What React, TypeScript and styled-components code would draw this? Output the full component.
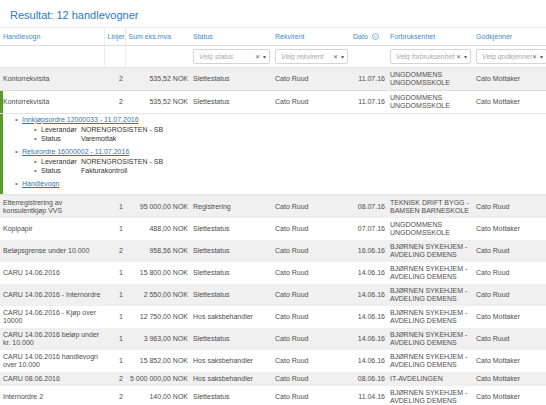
import React from 'react';
import styled, { createGlobalStyle } from 'styled-components';

const GlobalStyle = createGlobalStyle`
  html, body {
    margin: 0;
    padding: 0;
    background: #ffffff;
    overflow: hidden;
  }
  body {
    font-family: 'Liberation Sans', Arial, sans-serif;
  }
`;

const colors = {
  title: '#2a7bbd',
  head: '#3b8bd0',
  text: '#4d4d4d',
  dark: '#333333',
  link: '#2f76b8',
  stripe: '#f0f0f0',
  line: '#e2e2e2',
  green: '#5a9c28'
};

type Cart = {
  name: string;
  lines: number;
  sum: string;
  status: string;
  requester: string;
  date: string;
  unit: string;
  approver: string;
  expanded?: boolean;
};

const BJORNEN = 'BJØRNEN SYKEHJEM - AVDELING DEMENS';
const UNGDOM = 'UNGDOMMENS UNGDOMSSKOLE';

const carts: Cart[] = [
  { name: 'Kontorrekvisita', lines: 2, sum: '535,52 NOK', status: 'Slettestatus', requester: 'Cato Ruud', date: '11.07.16', unit: UNGDOM, approver: 'Cato Mottaker' },
  { name: 'Kontorrekvisita', lines: 2, sum: '535,52 NOK', status: 'Slettestatus', requester: 'Cato Ruud', date: '11.07.16', unit: UNGDOM, approver: 'Cato Mottaker', expanded: true },
  { name: 'Etterregistrering av konsulentkjøp VVS', lines: 1, sum: '95 000,00 NOK', status: 'Registrering', requester: 'Cato Ruud', date: '08.07.16', unit: 'TEKNISK DRIFT BYGG - BAMSEN BARNESKOLE', approver: 'Cato Ruud' },
  { name: 'Kopipapir', lines: 1, sum: '488,00 NOK', status: 'Slettestatus', requester: 'Cato Ruud', date: '07.07.16', unit: UNGDOM, approver: 'Cato Mottaker' },
  { name: 'Beløpsgrense under 10.000', lines: 2, sum: '958,56 NOK', status: 'Slettestatus', requester: 'Cato Ruud', date: '16.06.16', unit: BJORNEN, approver: 'Cato Ruud' },
  { name: 'CARU 14.06.2016', lines: 1, sum: '15 800,00 NOK', status: 'Slettestatus', requester: 'Cato Ruud', date: '14.06.16', unit: BJORNEN, approver: 'Cato Ruud' },
  { name: 'CARU 14.06.2016 - Internordre', lines: 1, sum: '2 550,00 NOK', status: 'Slettestatus', requester: 'Cato Ruud', date: '14.06.16', unit: BJORNEN, approver: 'Cato Ruud' },
  { name: 'CARU 14.06.2016 - Kjøp over 10000', lines: 1, sum: '12 750,00 NOK', status: 'Hos saksbehandler', requester: 'Cato Ruud', date: '14.06.16', unit: BJORNEN, approver: 'Cato Mottaker' },
  { name: 'CARU 14.06.2016 beløp under kr. 10.000', lines: 1, sum: '3 963,00 NOK', status: 'Slettestatus', requester: 'Cato Ruud', date: '14.06.16', unit: BJORNEN, approver: 'Cato Ruud' },
  { name: 'CARU 14.06.2016 handlevogn over 10.000', lines: 1, sum: '15 852,00 NOK', status: 'Hos saksbehandler', requester: 'Cato Ruud', date: '14.06.16', unit: BJORNEN, approver: 'Cato Mottaker' },
  { name: 'CARU 08.06.2016', lines: 2, sum: '5 000 000,00 NOK', status: 'Hos saksbehandler', requester: 'Cato Ruud', date: '08.06.16', unit: 'IT-AVDELINGEN', approver: 'Cato Mottaker' },
  { name: 'Internordre 2', lines: 2, sum: '140,00 NOK', status: 'Slettestatus', requester: 'Cato Ruud', date: '11.04.16', unit: BJORNEN, approver: 'Cato Mottaker' }
];

const orders = [
  { title: 'Innkjøpsordre 12000033 - 11.07.2016', supplier: 'NORENGROSISTEN - SB', status: 'Varemottak' },
  { title: 'Returordre 16000002 - 11.07.2016', supplier: 'NORENGROSISTEN - SB', status: 'Fakturakontroll' }
];

const columnWidths = [104, 21, 65, 82, 78, 37, 86, 76];

const Page = styled.div`
  width: 549px;
`;

const Title = styled.h2`
  margin: 0;
  padding: 9px 0 5px 10px;
  font-size: 11px;
  line-height: 13px;
  font-weight: normal;
  color: ${colors.title};
`;

const Table = styled.table`
  width: 549px;
  table-layout: fixed;
  border-collapse: collapse;
  font-size: 7px;
  color: ${colors.text};
`;

const HeadCell = styled.th<{ $divider?: boolean }>`
  height: 17px;
  padding: 0 3px;
  text-align: left;
  font-weight: normal;
  color: ${colors.head};
  border-top: 1px solid #ececec;
  border-bottom: 1px solid #dcdcdc;
  border-right: ${(p) => (p.$divider ? '1px solid #ececec' : 'none')};
  white-space: nowrap;
`;

const SortIcon = styled.svg`
  width: 7px;
  height: 7px;
  margin-left: 4px;
  vertical-align: -1px;
`;

const FilterCell = styled.td<{ $divider?: boolean }>`
  height: 21px;
  padding: 0 2px 0 3px;
  border-bottom: 1px solid #e4e4e4;
  border-right: ${(p) => (p.$divider ? '1px solid #ececec' : 'none')};
`;

const SelectBox = styled.div`
  display: flex;
  align-items: center;
  height: 15px;
  padding: 0 3px 0 5px;
  border: 1px solid #d4d4d4;
  border-radius: 2px;
  background: #ffffff;
  box-sizing: border-box;
`;

const Placeholder = styled.span`
  flex: 1;
  font-style: italic;
  color: #a9a9a9;
  white-space: nowrap;
  overflow: hidden;
`;

const SelectIcons = styled.span`
  display: flex;
  gap: 3px;
  align-items: center;
  color: #666666;
  font-size: 6px;
`;

const Row = styled.tr<{ $striped: boolean; $active?: boolean }>`
  background: ${(p) => (p.$striped ? colors.stripe : '#ffffff')};
  ${(p) =>
    p.$active &&
    `
    border-top: 1px solid #dddddd;
    border-bottom: 1px solid #e4e4e4;
    td:first-child { box-shadow: inset 3px 0 0 ${colors.green}; }
  `}
`;

const Cell = styled.td<{ $align?: 'left' | 'right' }>`
  padding: 3px 2px 3px 3px;
  line-height: 8px;
  text-align: ${(p) => p.$align || 'left'};
  vertical-align: middle;
`;

const DetailCell = styled.td`
  padding: 1px 0 5px 0;
  box-shadow: inset 3px 0 0 ${colors.green};
  border-bottom: 2px solid #e6e6e6;
  background: #ffffff;
  color: ${colors.dark};
  line-height: 10px;
`;

const OrderList = styled.ul`
  list-style: none;
  margin: 0;
  padding: 0 0 0 15px;
`;

const OrderItem = styled.li`
  & + & {
    margin-top: 3px;
  }
`;

const Line = styled.div`
  display: flex;
  align-items: center;
  height: 9.7px;
`;

const Bullet = styled.span`
  width: 7px;
  flex: none;
  font-size: 8px;
  color: #777777;
`;

const DocLink = styled.a`
  color: ${colors.link};
  text-decoration: underline;
`;

const PropList = styled.ul`
  list-style: none;
  margin: 0;
  padding: 0 0 0 19px;
`;

const PropLabel = styled.span`
  width: 40px;
  flex: none;
`;

const SelectFilter: React.FC<{ label: string }> = ({ label }) => (
  <SelectBox>
    <Placeholder>{label}</Placeholder>
    <SelectIcons>
      <span>✕</span>
      <span>▾</span>
    </SelectIcons>
  </SelectBox>
);

const App: React.FC = () => {
  return (
    <Page>
      <GlobalStyle />
      <Title>Resultat: 12 handlevogner</Title>
      <Table>
        <colgroup>
          {columnWidths.map((w, i) => (
            <col key={i} style={{ width: w }} />
          ))}
        </colgroup>
        <thead>
          <tr>
            <HeadCell $divider>Handlevogn</HeadCell>
            <HeadCell $divider>Linjer</HeadCell>
            <HeadCell>Sum eks.mva</HeadCell>
            <HeadCell>Status</HeadCell>
            <HeadCell>Rekvirent</HeadCell>
            <HeadCell>
              Dato
              <SortIcon viewBox="0 0 14 14">
                <circle cx="7" cy="7" r="6" fill="none" stroke={colors.head} strokeWidth="1.2" />
                <path d="M4.2 6l2.8 2.8L9.8 6" fill="none" stroke={colors.head} strokeWidth="1.3" />
              </SortIcon>
            </HeadCell>
            <HeadCell>Forbruksenhet</HeadCell>
            <HeadCell>Godkjenner</HeadCell>
          </tr>
          <tr>
            <FilterCell $divider />
            <FilterCell $divider />
            <FilterCell />
            <FilterCell>
              <SelectFilter label="Velg status" />
            </FilterCell>
            <FilterCell>
              <SelectFilter label="Velg rekvirent" />
            </FilterCell>
            <FilterCell />
            <FilterCell>
              <SelectFilter label="Velg forbruksenhet" />
            </FilterCell>
            <FilterCell>
              <SelectFilter label="Velg godkjenner" />
            </FilterCell>
          </tr>
        </thead>
        <tbody>
          {carts.map((c, i) => (
            <React.Fragment key={i}>
              <Row $striped={i % 2 === 0} $active={c.expanded}>
                <Cell>{c.name}</Cell>
                <Cell $align="right">{c.lines}</Cell>
                <Cell $align="right">{c.sum}</Cell>
                <Cell>{c.status}</Cell>
                <Cell>{c.requester}</Cell>
                <Cell $align="right">{c.date}</Cell>
                <Cell>{c.unit}</Cell>
                <Cell>{c.approver}</Cell>
              </Row>
              {c.expanded && (
                <tr>
                  <DetailCell colSpan={8}>
                    <OrderList>
                      {orders.map((o) => (
                        <OrderItem key={o.title}>
                          <Line>
                            <Bullet>•</Bullet>
                            <DocLink>{o.title}</DocLink>
                          </Line>
                          <PropList>
                            <li>
                              <Line>
                                <Bullet>•</Bullet>
                                <PropLabel>Leverandør</PropLabel>
                                <span>{o.supplier}</span>
                              </Line>
                            </li>
                            <li>
                              <Line>
                                <Bullet>•</Bullet>
                                <PropLabel>Status</PropLabel>
                                <span>{o.status}</span>
                              </Line>
                            </li>
                          </PropList>
                        </OrderItem>
                      ))}
                      <OrderItem>
                        <Line>
                          <Bullet>•</Bullet>
                          <DocLink>Handlevogn</DocLink>
                        </Line>
                      </OrderItem>
                    </OrderList>
                  </DetailCell>
                </tr>
              )}
            </React.Fragment>
          ))}
        </tbody>
      </Table>
    </Page>
  );
};

export default App;
